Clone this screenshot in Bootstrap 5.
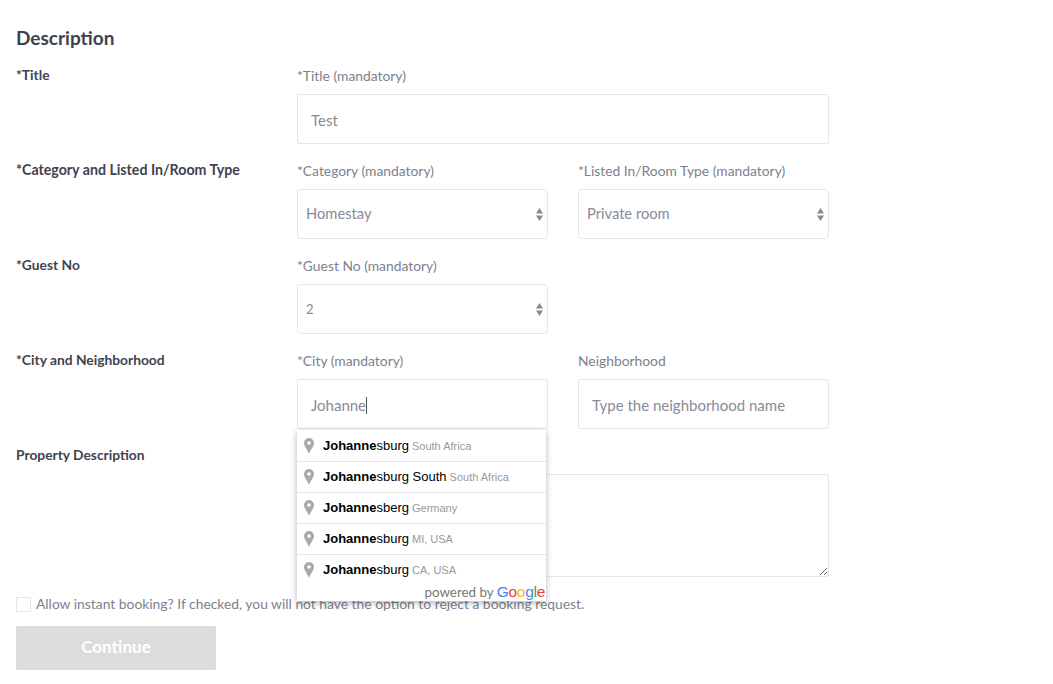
<!DOCTYPE html>
<html lang="en">
<head>
<meta charset="utf-8">
<title>Description</title>
<link href="https://cdn.jsdelivr.net/npm/bootstrap@5.3.0/dist/css/bootstrap.min.css" rel="stylesheet">
<style>
html, body { background: #fff; }
body { font-family: Lato, "Liberation Sans", sans-serif; color: #7d818f; overflow: hidden; }
.sheet { width: 813px; margin-left: 16px; padding-top: 26px; }
.sheet .row { --bs-gutter-x: 30px; }
.sec-title { font-size: 19px; font-weight: 700; color: #3d4251; line-height: 23px; margin: 0 0 17px; }
.form-band { height: 95px; }
.side-label { font-size: 13.8px; font-weight: 700; color: #3f4350; line-height: 20px; margin-top: -1px; }
.side-wide { font-size: 14.2px; }
.field-label { font-size: 13.85px; color: #7d818f; line-height: 20px; margin-bottom: 8px; display: block; }
.sheet .form-control, .sheet .form-select {
  height: 50px; border: 1px solid #e6e6e6; border-radius: 2px; font-size: 15px; color: #878b98; box-shadow: none;
}
.sheet .form-control { padding: 1px 13px 0; }
.sheet .form-control::placeholder { color: #878b98; opacity: 1; }
.sheet .form-select {
  padding: 0 24px 1px 8px; border-radius: 4px; font-size: 14.7px;
  background-image: url("data:image/svg+xml,%3Csvg xmlns='http://www.w3.org/2000/svg' width='7' height='13'%3E%3Cpath fill='%23858995' d='M3.500 0L7 5.500H0zM3.500 13L7 7.500H0z'/%3E%3C/svg%3E");
  background-size: 7px 13px; background-position: right 4px center;
}
.sheet .num-select { font-size: 13px; padding-top: 2px; padding-bottom: 0; }
.city-box { position: relative; }
.fake-caret { position: absolute; left: 69px; top: 18px; width: 1px; height: 17px; background: #555; }
.sheet textarea.form-control { height: 103px; padding: 10px 13px; }
.suggest {
  position: absolute; left: 0; top: 51px; width: 249px; height: 171px; background: #fff; z-index: 5;
  box-shadow: 0 2px 6px rgba(0,0,0,.3); font-family: "Liberation Sans", Arial, sans-serif; overflow: hidden;
}
.suggest-item { height: 31px; border-top: 1px solid #e6e6e6; display: flex; align-items: center; padding-left: 7px; font-size: 13px; color: #000; white-space: nowrap; }
.suggest-item:first-child { border-top: 0; height: 31px; padding-top: 1px; }
.suggest-item svg { flex: none; margin-right: 9px; }
.suggest-item b { font-weight: 700; }
.suggest-sub { font-size: 11px; color: #999; margin-left: 3px; }
.suggest-foot { display: flex; justify-content: flex-end; align-items: center; font-family: Lato, sans-serif; font-size: 13.4px; color: #777; line-height: 14px; padding-right: 1px; gap: 3px; }
.g-word { font-family: "Liberation Sans", sans-serif; font-size: 15.5px; letter-spacing: -.3px; }
.g-b { color: #4285f4; } .g-r { color: #ea4335; } .g-y { color: #fbbc05; } .g-g { color: #34a853; }
.book-line { display: flex; align-items: center; gap: 5px; margin-top: 19px; font-size: 13.85px; line-height: 16px; color: #7d818f; }
.book-tick { width: 15px; height: 15px; border: 1px solid #e6e6ee; background: #fff; flex: none; display: block; }
.go-btn { width: 200px; height: 44px; margin-top: 14px; padding: 0 0 2px; background: #dcdcdc; border: 0; border-radius: 2px; color: #fff; font-size: 17px; font-weight: 700; display: block; }
.go-btn:disabled { background: #dcdcdc; color: #fff; opacity: 1; }
</style>
</head>
<body>
<div class="sheet">
  <h2 class="sec-title">Description</h2>

  <div class="row form-band">
    <div class="col-4"><div class="side-label">*Title</div></div>
    <div class="col-8">
      <label class="field-label">*Title (mandatory)</label>
      <input class="form-control" value="Test">
    </div>
  </div>

  <div class="row form-band">
    <div class="col-4"><div class="side-label side-wide">*Category and Listed In/Room Type</div></div>
    <div class="col-8">
      <div class="row">
        <div class="col-6">
          <label class="field-label">*Category (mandatory)</label>
          <select class="form-select"><option>Homestay</option></select>
        </div>
        <div class="col-6">
          <label class="field-label">*Listed In/Room Type (mandatory)</label>
          <select class="form-select"><option>Private room</option></select>
        </div>
      </div>
    </div>
  </div>

  <div class="row form-band">
    <div class="col-4"><div class="side-label">*Guest No</div></div>
    <div class="col-8">
      <div class="row">
        <div class="col-6">
          <label class="field-label">*Guest No (mandatory)</label>
          <select class="form-select num-select"><option>2</option></select>
        </div>
      </div>
    </div>
  </div>

  <div class="row form-band">
    <div class="col-4"><div class="side-label">*City and Neighborhood</div></div>
    <div class="col-8">
      <div class="row">
        <div class="col-6">
          <label class="field-label">*City (mandatory)</label>
          <div class="city-box">
            <input class="form-control" value="Johanne">
            <span class="fake-caret"></span>
            <div class="suggest">
              <div class="suggest-item"><svg width="10" height="16" viewBox="0 0 10 16"><path fill="#a9a9a9" fill-rule="evenodd" d="M5 0a5 5 0 0 1 5 5c0 3.500-3.500 6.500-5 11C3.500 11.500 0 8.500 0 5a5 5 0 0 1 5-5zm0 3.200a1.800 1.800 0 1 0 0 3.600 1.800 1.800 0 0 0 0-3.600z"/></svg><span><b>Johanne</b>sburg</span><span class="suggest-sub">South Africa</span></div>
              <div class="suggest-item"><svg width="10" height="16" viewBox="0 0 10 16"><path fill="#a9a9a9" fill-rule="evenodd" d="M5 0a5 5 0 0 1 5 5c0 3.500-3.500 6.500-5 11C3.500 11.500 0 8.500 0 5a5 5 0 0 1 5-5zm0 3.200a1.800 1.800 0 1 0 0 3.600 1.800 1.800 0 0 0 0-3.600z"/></svg><span><b>Johanne</b>sburg South</span><span class="suggest-sub">South Africa</span></div>
              <div class="suggest-item"><svg width="10" height="16" viewBox="0 0 10 16"><path fill="#a9a9a9" fill-rule="evenodd" d="M5 0a5 5 0 0 1 5 5c0 3.500-3.500 6.500-5 11C3.500 11.500 0 8.500 0 5a5 5 0 0 1 5-5zm0 3.200a1.800 1.800 0 1 0 0 3.600 1.800 1.800 0 0 0 0-3.600z"/></svg><span><b>Johanne</b>sberg</span><span class="suggest-sub">Germany</span></div>
              <div class="suggest-item"><svg width="10" height="16" viewBox="0 0 10 16"><path fill="#a9a9a9" fill-rule="evenodd" d="M5 0a5 5 0 0 1 5 5c0 3.500-3.500 6.500-5 11C3.500 11.500 0 8.500 0 5a5 5 0 0 1 5-5zm0 3.200a1.800 1.800 0 1 0 0 3.600 1.800 1.800 0 0 0 0-3.600z"/></svg><span><b>Johanne</b>sburg</span><span class="suggest-sub">MI, USA</span></div>
              <div class="suggest-item"><svg width="10" height="16" viewBox="0 0 10 16"><path fill="#a9a9a9" fill-rule="evenodd" d="M5 0a5 5 0 0 1 5 5c0 3.500-3.500 6.500-5 11C3.500 11.500 0 8.500 0 5a5 5 0 0 1 5-5zm0 3.200a1.800 1.800 0 1 0 0 3.600 1.800 1.800 0 0 0 0-3.600z"/></svg><span><b>Johanne</b>sburg</span><span class="suggest-sub">CA, USA</span></div>
              <div class="suggest-foot"><span>powered by</span><span class="g-word"><span class="g-b">G</span><span class="g-r">o</span><span class="g-y">o</span><span class="g-b">g</span><span class="g-g">l</span><span class="g-r">e</span></span></div>
            </div>
          </div>
        </div>
        <div class="col-6">
          <label class="field-label">Neighborhood</label>
          <input class="form-control" placeholder="Type the neighborhood name">
        </div>
      </div>
    </div>
  </div>

  <div class="row">
    <div class="col-4"><div class="side-label">Property Description</div></div>
    <div class="col-8">
      <label class="field-label">&nbsp;</label>
      <textarea class="form-control"></textarea>
    </div>
  </div>

  <label class="book-line"><span class="book-tick"></span><span>Allow instant booking? If checked, you will not have the option to reject a booking request.</span></label>
  <button class="go-btn" disabled>Continue</button>
</div>
<script src="https://cdn.jsdelivr.net/npm/bootstrap@5.3.0/dist/js/bootstrap.bundle.min.js"></script>
</body>
</html>
